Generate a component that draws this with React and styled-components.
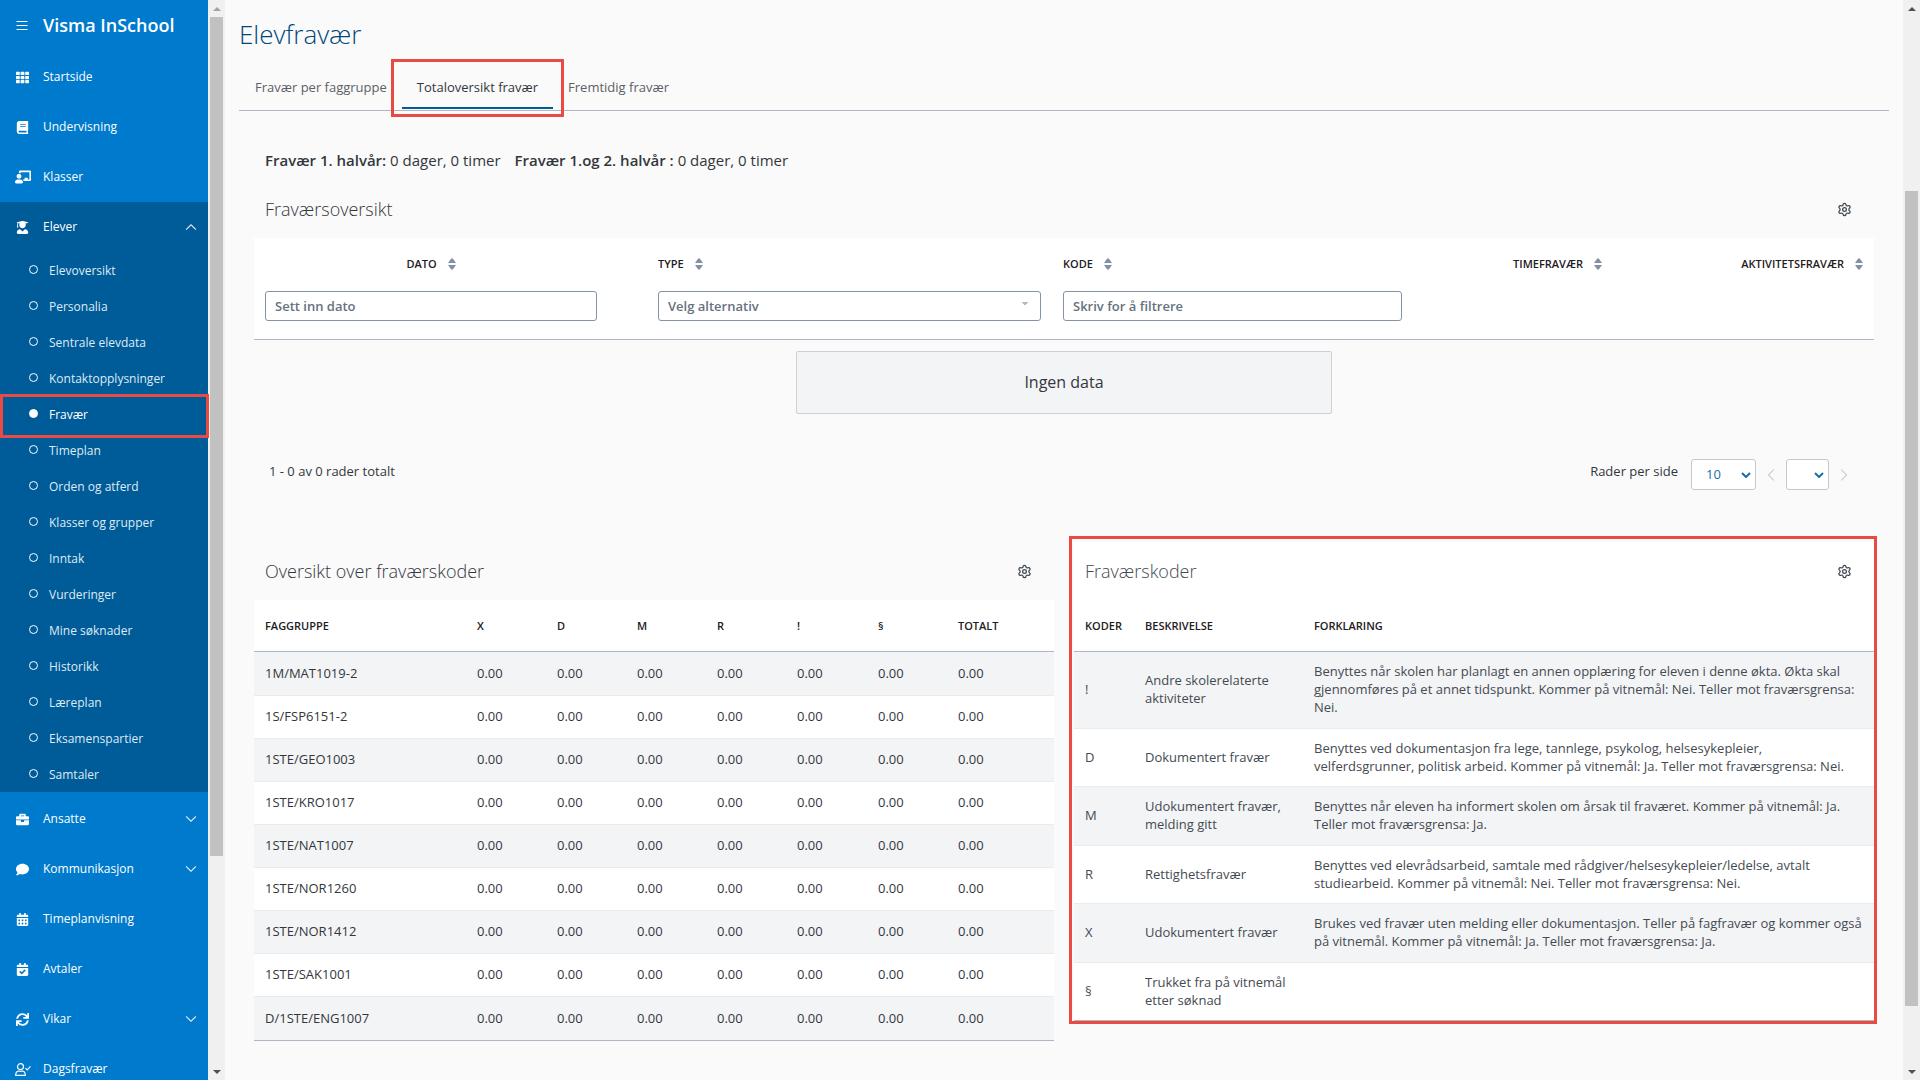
import React from 'react';
import styled, { createGlobalStyle, css } from 'styled-components';
import {
  FaTh, FaBook, FaChalkboardTeacher, FaUserGraduate, FaBriefcase, FaComment,
  FaCalendarAlt, FaCalendarCheck, FaSync,
} from 'react-icons/fa';
import { BsChevronUp, BsChevronDown, BsChevronLeft, BsChevronRight } from 'react-icons/bs';
import { Settings } from 'lucide-react';

const GlobalStyle = createGlobalStyle`
  *, *::before, *::after { box-sizing: border-box; }
  body {
    margin: 0;
    background: #fafafa;
    color: #33373c;
    font-family: "Open Sans", "Noto Sans", sans-serif;
    font-size: 13px;
    line-height: 18px;
    overflow: hidden;
  }
  button, input, select { font: inherit; color: inherit; }
  h1, h2, p, ul { margin: 0; padding: 0; }
  ul { list-style: none; }
`;

const Layout = styled.div`
  display: flex;
  height: 100vh;
  overflow: hidden;
`;

/* Sidebar */

const Sidebar = styled.nav`
  flex: none;
  width: 208px;
  background: #007acc;
  color: #fff;
  font-size: 12px;
  font-weight: 500;
`;

const Brand = styled.div`
  display: flex;
  align-items: center;
  height: 50px;
  padding: 0 16px;
  font-size: 18px;
  font-weight: 600;
`;

const MenuButton = styled.button`
  display: flex;
  width: 27px;
  padding: 0;
  border: 0;
  background: none;
  color: #fff;
`;

const NavGroup = styled.ul`
  padding-top: 2px;
`;

const NavSection = styled.li`
  background: ${(p) => (p.$open ? '#005b99' : 'transparent')};
`;

const NavLink = styled.a`
  display: flex;
  align-items: center;
  height: 50px;
  padding: 0 11px 0 14px;
  color: inherit;
  text-decoration: none;
`;

const NavIcon = styled.span`
  display: flex;
  justify-content: center;
  width: 17px;
  margin-right: 12px;
  font-size: ${(p) => (p.$wide ? 16 : 13)}px;
`;

const NavLabel = styled.span`
  flex: 1;
`;

const NavChevron = styled.span`
  display: flex;
  svg { stroke: currentColor; stroke-width: 0.5; }
`;

const SubItem = styled.li`
  position: relative;
  ${(p) => p.$marked && css`
    &::after {
      content: '';
      position: absolute;
      inset: -2px -1px -6px 0;
      border: 3px solid #e94b43;
      pointer-events: none;
      z-index: 2;
    }
  `}
`;

const SubLink = styled.a`
  display: flex;
  align-items: center;
  gap: 11px;
  height: 36px;
  padding: 2px 0 0 29px;
  color: ${(p) => (p.$active ? '#fff' : '#dfebf5')};
  font-weight: ${(p) => (p.$active ? 500 : 400)};
  text-decoration: none;
  &::before {
    content: '';
    width: 9px;
    height: 9px;
    margin-bottom: 3px;
    border: 1px solid #fff;
    border-radius: 50%;
    background: ${(p) => (p.$active ? '#fff' : 'transparent')};
  }
`;

/* Scroll tracks */

const Track = styled.div`
  flex: none;
  display: grid;
  grid-template-rows: 17px ${(p) => p.$rows} 17px;
  justify-items: center;
  align-items: center;
  width: 17px;
  background: #f0f0f0;
`;

const Thumb = styled.div`
  grid-row: 3;
  width: 13px;
  height: 100%;
  background: #c1c1c1;
`;

const Arrow = styled.div`
  grid-row: ${(p) => (p.$down ? 5 : 1)};
  border: 4px solid transparent;
  border-width: ${(p) => (p.$down ? '4px 4px 0' : '0 4px 4px')};
  border-top-color: ${(p) => p.$color};
  border-bottom-color: ${(p) => p.$color};
`;

/* Main */

const Main = styled.main`
  flex: 1;
  min-width: 0;
  padding: 17px 14px 0;
`;

const Title = styled.h1`
  color: #00477a;
  font-size: 26px;
  font-weight: 300;
  line-height: 34px;
`;

const Tabs = styled.div`
  display: flex;
  height: 45px;
  margin-top: 15px;
  padding: 0 1px 1px;
  border-bottom: 1px solid #adb8c4;
`;

const Tab = styled.button`
  position: relative;
  padding: 0 15px;
  border: 0;
  border-bottom: 2px solid ${(p) => (p.$active ? '#005b99' : 'transparent')};
  background: none;
  color: ${(p) => (p.$active ? '#33373c' : '#5c6066')};
  ${(p) => p.$active && css`
    &::after {
      content: '';
      position: absolute;
      inset: -7px -11px -10px;
      border: 3px solid #e94b43;
      pointer-events: none;
    }
  `}
`;

const Content = styled.div`
  padding: 40px 15px 0;
`;

const Summary = styled.p`
  display: flex;
  gap: 14px;
  padding-left: 11px;
  font-size: 15px;
  line-height: 18px;
  strong { font-weight: 600; }
`;

const PanelHeader = styled.header`
  display: flex;
  align-items: center;
  justify-content: space-between;
  height: 58px;
  padding: 0 22px 0 11px;
`;

const PanelTitle = styled.h2`
  font-size: 18px;
  font-weight: 300;
  line-height: 24px;
`;

const IconButton = styled.button`
  display: flex;
  padding: 0;
  border: 0;
  background: none;
  color: ${(p) => (p.$muted ? '#b9bec4' : '#3f474f')};
  font-size: 14px;
`;

const Overview = styled.section`
  margin-top: 11px;
`;

const Table = styled.table`
  width: 100%;
  table-layout: fixed;
  border-spacing: 0;
  border-bottom: ${(p) => (p.$closed ? 1 : 0)}px solid #adb8c4;
  background: #fff;
`;

const Th = styled.th`
  height: 52px;
  padding: 0 11px;
  border-bottom: ${(p) => (p.$plain ? 0 : 1)}px solid #adb8c4;
  color: #1d2023;
  font-size: 11px;
  font-weight: 600;
  text-align: ${(p) => p.$align || 'left'};
  text-transform: uppercase;
  white-space: nowrap;
`;

const FilterCell = styled.td`
  height: 50px;
  padding: 1px 11px 18px;
  border-bottom: 1px solid #adb8c4;
`;

const SortButton = styled.button`
  display: inline-flex;
  align-items: center;
  gap: 11px;
  padding: 0;
  border: 0;
  background: none;
  text-transform: inherit;
`;

const field = css`
  display: block;
  width: 100%;
  height: 30px;
  padding: 0 9px;
  border: 1px solid #8494a6;
  border-radius: 3px;
  background: #fff;
  color: #66727e;
  font-weight: 600;
`;

const Field = styled.input`
  ${field}
  &::placeholder { color: #66727e; opacity: 1; }
`;

const FilterSelect = styled.select`
  ${field}
  appearance: none;
  background: linear-gradient(to bottom right, #b4babf 50%, transparent 0) right 11px top 10px / 4px 4px no-repeat,
    linear-gradient(to bottom left, #b4babf 50%, transparent 0) right 15px top 10px / 4px 4px no-repeat, #fff;
`;

const BodyRow = styled.tr`
  td {
    height: ${(p) => p.$height}px;
    padding: 0 11px 2px;
    border-bottom: 1px solid #e9ebed;
  }
  &:nth-child(odd) td { background: #f3f4f6; }
  &:last-child td { border-bottom: 0; }
`;

const Empty = styled.div`
  width: 536px;
  max-width: 100%;
  margin: 11px auto 45px;
  padding: 19px 0;
  border: 1px solid #cdd1d5;
  border-radius: 2px;
  background: #f3f4f6;
  font-size: 16px;
  line-height: 23px;
  text-align: center;
`;

const Pager = styled.div`
  display: flex;
  justify-content: space-between;
  padding: 0 23px 0 15px;
  line-height: 25px;
`;

const PagerControls = styled.div`
  display: flex;
  gap: 8px;
`;

const PagerLabel = styled.label`
  margin-right: 5px;
`;

const PagerSelectBox = styled.span`
  position: relative;
  width: ${(p) => p.$width}px;
  color: #1a6ea8;
  svg {
    position: absolute;
    right: 5px;
    top: 13px;
    pointer-events: none;
  }
`;

const PagerSelect = styled.select`
  appearance: none;
  display: block;
  width: 100%;
  height: 31px;
  padding: 0 14px;
  border: 1px solid #c6c9cc;
  border-radius: 3px;
  background: #fff;
`;

const PagerStep = styled.div`
  display: flex;
  align-items: center;
  height: 31px;
`;

const Columns = styled.div`
  display: grid;
  grid-template-columns: 1fr 1fr;
  align-items: start;
  gap: 20px;
  margin-top: 52px;
`;

const Panel = styled.section`
  position: relative;
  ${(p) => p.$marked && css`
    background: #fff;
    color: #444a52;
    &::after {
      content: '';
      position: absolute;
      inset: -6px -3px -3px -5px;
      border: 3px solid #e94b43;
      pointer-events: none;
    }
  `}
`;

function SortIcon() {
  return (
    <svg width="8" height="12" viewBox="0 0 8 12" fill="#8292a2" aria-hidden="true">
      <path d="M3.2 0.5h1.6L8 5H0zM3.2 11.5h1.6L8 7H0z" />
    </svg>
  );
}

function SelectCaret() {
  return (
    <svg width="10" height="6" viewBox="0 0 10 6" fill="none" stroke="#1a6ea8" strokeWidth="2" aria-hidden="true">
      <path d="M1 1l4 4 4-4" />
    </svg>
  );
}

function PersonCheckIcon() {
  return (
    <svg width="16" height="13" viewBox="0 0 16 13" fill="none" stroke="#fff" strokeWidth="1.2" aria-hidden="true">
      <circle cx="5.5" cy="3.7" r="3" />
      <path d="M0.7 12.3c0-3 1.5-4.3 3.3-4.3 1 .5 2 .5 3 0 1.8 0 3.3 1.3 3.3 4.3z" />
      <path d="M10.5 5.2l1.7 1.7 3.3-3.6" />
    </svg>
  );
}

const subItems = [
  'Elevoversikt', 'Personalia', 'Sentrale elevdata', 'Kontaktopplysninger', 'Fravær', 'Timeplan',
  'Orden og atferd', 'Klasser og grupper', 'Inntak', 'Vurderinger', 'Mine søknader', 'Historikk',
  'Læreplan', 'Eksamenspartier', 'Samtaler',
];

const topNav = [
  { label: 'Startside', Icon: FaTh },
  { label: 'Undervisning', Icon: FaBook },
  { label: 'Klasser', Icon: FaChalkboardTeacher, wide: true },
  { label: 'Elever', Icon: FaUserGraduate, open: true, items: subItems },
];

const bottomNav = [
  { label: 'Ansatte', Icon: FaBriefcase, items: [] },
  { label: 'Kommunikasjon', Icon: FaComment, items: [] },
  { label: 'Timeplanvisning', Icon: FaCalendarAlt },
  { label: 'Avtaler', Icon: FaCalendarCheck },
  { label: 'Vikar', Icon: FaSync, items: [] },
  { label: 'Dagsfravær', Icon: PersonCheckIcon, wide: true },
];

const subjects = [
  '1M/MAT1019-2', '1S/FSP6151-2', '1STE/GEO1003', '1STE/KRO1017', '1STE/NAT1007',
  '1STE/NOR1260', '1STE/NOR1412', '1STE/SAK1001', 'D/1STE/ENG1007',
];

const subjectColumns = ['X', 'D', 'M', 'R', '!', '§', 'Totalt'];

const codes = [
  ['!', 'Andre skolerelaterte aktiviteter', 'Benyttes når skolen har planlagt en annen opplæring for eleven i denne økta. Økta skal gjennomføres på et annet tidspunkt. Kommer på vitnemål: Nei. Teller mot fraværsgrensa: Nei.', 77],
  ['D', 'Dokumentert fravær', 'Benyttes ved dokumentasjon fra lege, tannlege, psykolog, helsesykepleier, velferdsgrunner, politisk arbeid. Kommer på vitnemål: Ja. Teller mot fraværsgrensa: Nei.', 58],
  ['M', 'Udokumentert fravær, melding gitt', 'Benyttes når eleven ha informert skolen om årsak til fraværet. Kommer på vitnemål: Ja. Teller mot fraværsgrensa: Ja.', 59],
  ['R', 'Rettighetsfravær', 'Benyttes ved elevrådsarbeid, samtale med rådgiver/helsesykepleier/ledelse, avtalt studiearbeid. Kommer på vitnemål: Nei. Teller mot fraværsgrensa: Nei.', 58],
  ['X', 'Udokumentert fravær', 'Brukes ved fravær uten melding eller dokumentasjon. Teller på fagfravær og kommer også på vitnemål. Kommer på vitnemål: Ja. Teller mot fraværsgrensa: Ja.', 59],
  ['§', 'Trukket fra på vitnemål etter søknad', '', 57],
];

function NavList({ entries }) {
  return (
    <NavGroup>
      {entries.map(({ label, Icon, wide, open, items }) => (
        <NavSection key={label} $open={open}>
          <NavLink href="#">
            <NavIcon $wide={wide}><Icon /></NavIcon>
            <NavLabel>{label}</NavLabel>
            {items && <NavChevron>{open ? <BsChevronUp /> : <BsChevronDown />}</NavChevron>}
          </NavLink>
          {open && (
            <ul>
              {items.map((item) => (
                <SubItem key={item} $marked={item === 'Fravær'}>
                  <SubLink href="#" $active={item === 'Fravær'}>{item}</SubLink>
                </SubItem>
              ))}
            </ul>
          )}
        </NavSection>
      ))}
    </NavGroup>
  );
}

function PanelHead({ title }) {
  return (
    <PanelHeader>
      <PanelTitle>{title}</PanelTitle>
      <IconButton aria-label="Innstillinger"><Settings size={15} strokeWidth={2} /></IconButton>
    </PanelHeader>
  );
}

function SortHead({ children, align }) {
  return (
    <Th $plain $align={align}>
      <SortButton>{children}<SortIcon /></SortButton>
    </Th>
  );
}

function ScrollTrack({ rows, topColor }) {
  return (
    <Track $rows={rows} aria-hidden="true">
      <Arrow $color={topColor} />
      <Thumb />
      <Arrow $down $color="#505050" />
    </Track>
  );
}

function Cols({ widths }) {
  return <colgroup>{widths.map((w, i) => <col key={i} width={w} />)}</colgroup>;
}

export default function App() {
  return (
    <>
      <GlobalStyle />
      <Layout>
        <Sidebar>
          <Brand>
            <MenuButton aria-label="Meny">
              <svg width="12" height="11" viewBox="0 0 12 11" stroke="#fff" aria-hidden="true">
                <path d="M0.5 1.5h11M0.5 5.5h11M0.5 9.5h11" />
              </svg>
            </MenuButton>
            Visma InSchool
          </Brand>
          <NavList entries={topNav} />
          <NavList entries={bottomNav} />
        </Sidebar>
        <ScrollTrack rows="0fr 839fr 207fr" topColor="#a3a3a3" />

        <Main>
          <Title>Elevfravær</Title>
          <Tabs role="tablist">
            <Tab role="tab">Fravær per faggruppe</Tab>
            <Tab role="tab" aria-selected="true" $active>Totaloversikt fravær</Tab>
            <Tab role="tab">Fremtidig fravær</Tab>
          </Tabs>

          <Content>
            <Summary>
              <span><strong>Fravær 1. halvår:</strong> 0 dager, 0 timer</span>
              <span><strong>Fravær 1.og 2. halvår :</strong> 0 dager, 0 timer</span>
            </Summary>

            <Overview>
              <PanelHead title="Fraværsoversikt" />
              <Table>
                <Cols widths={[354, 39, 405, 361, 200, 261]} />
                <thead>
                  <tr>
                    <SortHead align="center">Dato</SortHead>
                    <Th $plain />
                    <SortHead>Type</SortHead>
                    <SortHead>Kode</SortHead>
                    <SortHead align="right">Timefravær</SortHead>
                    <SortHead align="right">Aktivitetsfravær</SortHead>
                  </tr>
                </thead>
                <tbody>
                  <tr>
                    <FilterCell><Field aria-label="Dato" placeholder="Sett inn dato" /></FilterCell>
                    <FilterCell />
                    <FilterCell>
                      <FilterSelect aria-label="Type"><option>Velg alternativ</option></FilterSelect>
                    </FilterCell>
                    <FilterCell><Field aria-label="Kode" placeholder="Skriv for å filtrere" /></FilterCell>
                    <FilterCell />
                    <FilterCell />
                  </tr>
                </tbody>
              </Table>
              <Empty>Ingen data</Empty>
              <Pager>
                <span>1 - 0 av 0 rader totalt</span>
                <PagerControls>
                  <PagerLabel htmlFor="page-size">Rader per side</PagerLabel>
                  <PagerSelectBox $width={65}>
                    <PagerSelect id="page-size"><option>10</option></PagerSelect>
                    <SelectCaret />
                  </PagerSelectBox>
                  <PagerStep><IconButton $muted aria-label="Forrige side"><BsChevronLeft /></IconButton></PagerStep>
                  <PagerSelectBox $width={43}>
                    <PagerSelect aria-label="Side" />
                    <SelectCaret />
                  </PagerSelectBox>
                  <PagerStep><IconButton $muted aria-label="Neste side"><BsChevronRight /></IconButton></PagerStep>
                </PagerControls>
              </Pager>
            </Overview>

            <Columns>
              <Panel>
                <PanelHead title="Oversikt over fraværskoder" />
                <Table $closed>
                  <Cols widths={[212, 80, 80, 80, 80, 81, 80, 107]} />
                  <thead>
                    <tr>
                      <Th>Faggruppe</Th>
                      {subjectColumns.map((c) => <Th key={c}>{c}</Th>)}
                    </tr>
                  </thead>
                  <tbody>
                    {subjects.map((s, i) => (
                      <BodyRow key={s} $height={i === 0 ? 44 : 43}>
                        <td>{s}</td>
                        {subjectColumns.map((c) => <td key={c}>0.00</td>)}
                      </BodyRow>
                    ))}
                  </tbody>
                </Table>
              </Panel>

              <Panel $marked>
                <PanelHead title="Fraværskoder" />
                <Table $closed>
                  <Cols widths={[60, 169, 571]} />
                  <thead>
                    <tr>
                      <Th>Koder</Th>
                      <Th>Beskrivelse</Th>
                      <Th>Forklaring</Th>
                    </tr>
                  </thead>
                  <tbody>
                    {codes.map(([code, name, text, height]) => (
                      <BodyRow key={code} $height={height}>
                        <td>{code}</td>
                        <td>{name}</td>
                        <td>{text}</td>
                      </BodyRow>
                    ))}
                  </tbody>
                </Table>
              </Panel>
            </Columns>
          </Content>
        </Main>
        <ScrollTrack rows="174fr 815fr 57fr" topColor="#505050" />
      </Layout>
    </>
  );
}
